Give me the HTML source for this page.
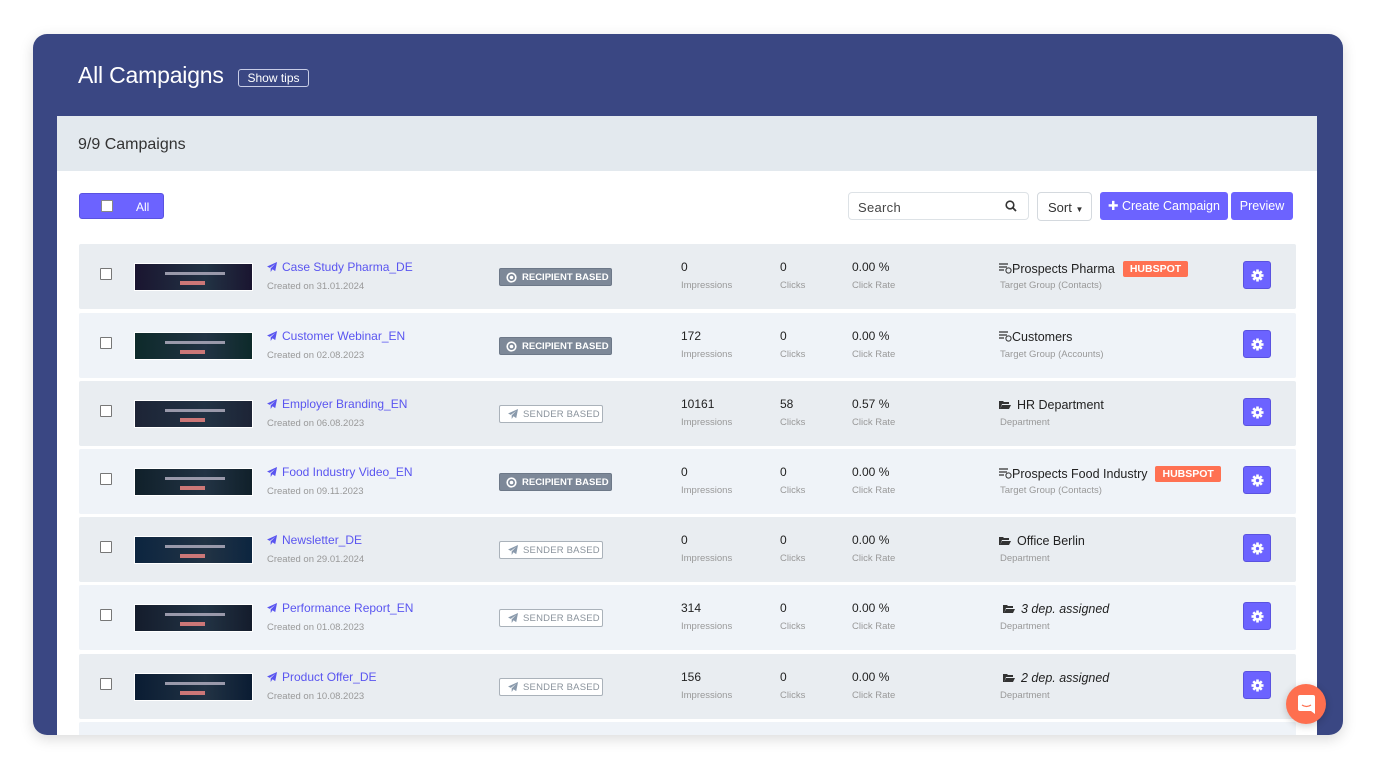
<!DOCTYPE html>
<html><head><meta charset="utf-8"><style>
*{box-sizing:border-box;margin:0;padding:0}
body{width:1376px;height:769px;background:#fff;font-family:"Liberation Sans",sans-serif;position:relative;overflow:hidden}
.shadow{position:absolute;left:33px;top:34px;width:1310px;height:701px;border-radius:14px;box-shadow:0 4px 14px rgba(0,0,0,.15)}
.clip{position:absolute;left:33px;top:34px;width:1310px;height:701px;border-radius:14px;overflow:hidden;background:#3a4783}
.in{position:absolute;left:-33px;top:-34px;width:1376px;height:769px}
.h1{position:absolute;left:78px;top:62px;color:#fff;font-size:23px;font-family:"Liberation Sans",sans-serif;letter-spacing:-.2px}
.tips{position:absolute;left:238px;top:69px;width:71px;height:18px;border:1px solid #c8cde6;border-radius:3px;color:#fff;font-size:12px;text-align:center;line-height:16px}
.panel{position:absolute;left:57px;top:116px;width:1260px;height:660px;background:#fff}
.ph{position:absolute;left:57px;top:116px;width:1260px;height:55px;background:#e3e9ee;color:#333;font-size:16px;padding:20px 0 0 21px}
.btnall{position:absolute;left:79px;top:193px;width:85px;height:26px;background:#6c63ff;border-radius:3px;border:1px solid #5a52e0}
.cb{position:absolute;width:12px;height:12px;border:1.5px solid #777;background:#fff;border-radius:1px}
.search{position:absolute;left:848px;top:192px;width:181px;height:28px;border:1px solid #dde2e6;border-radius:4px;font-size:13px;color:#444;padding:7px 0 0 9px;letter-spacing:.3px}
.sort{position:absolute;left:1037px;top:192px;width:55px;height:29px;border:1px solid #d4d9de;border-radius:4px;font-size:13px;color:#333;padding:7px 0 0 10px}
.pb{position:absolute;top:192px;height:28px;background:#6c63ff;border-radius:3px;color:#fff;font-size:12.5px;text-align:center;line-height:28px}
.row{position:absolute;left:79px;width:1217px;height:65px;border-radius:2px}
.row.a{background:#e9edf1}.row.b{background:#eff3f8}
.th{position:absolute;left:55px;top:19px;width:119px;height:28px;border:1px solid #fff}
.title{position:absolute;left:188px;top:16px;color:#5a55f0;font-size:12px;white-space:nowrap}
.sub{position:absolute;font-size:9.5px;color:#999;white-space:nowrap}
.badge{position:absolute;left:420px;top:24px;height:18px;font-size:9.5px;font-weight:bold;border-radius:2px;padding:0 0 0 22px;line-height:17px;white-space:nowrap}
.rb{width:113px;background:#7d8898;color:#fff;border:1px solid #6d7888}
.sb{width:104px;background:#fff;color:#8a939c;border:1px solid #aab2ba;font-weight:normal;padding-left:23px;letter-spacing:.2px}
.num{position:absolute;top:16px;font-size:12px;color:#222}
.tg{position:absolute;left:920px;top:17px;font-size:12.5px;color:#222;white-space:nowrap}
.hs{display:inline-block;background:#ff7152;color:#fff;font-size:10.5px;font-weight:bold;padding:2px 7px;border-radius:2px;margin-left:8px;vertical-align:1px}
.gear{position:absolute;left:1164px;top:17px;width:28px;height:28px;background:#6c63ff;border-radius:3px;border:1px solid #5a52e0}
.chat{position:absolute;left:1286px;top:684px;width:40px;height:40px;border-radius:50%;background:#fe6f4f;box-shadow:0 2px 8px rgba(0,0,0,.2)}
</style></head><body>
<div class="shadow"></div>
<div class="clip"><div class="in">
<div class="h1">All Campaigns</div>
<div class="tips">Show tips</div>
<div class="panel"></div>
<div class="ph">9/9 Campaigns</div>
<div class="btnall"><div class="cb" style="left:21px;top:6px;border-color:#888"></div><span style="position:absolute;left:56px;top:6px;color:#fff;font-size:12px">All</span></div>
<div class="search">Search<svg style="position:absolute;right:11px;top:7px" width="12" height="12" viewBox="0 0 12 12"><circle cx="5" cy="5" r="3.8" fill="none" stroke="#333" stroke-width="1.6"/><path d="M8 8l3 3" stroke="#333" stroke-width="1.8"/></svg></div>
<div class="sort">Sort <span style="font-size:8px">▼</span></div>
<div class="pb" style="left:1100px;width:128px">✚ Create Campaign</div>
<div class="pb" style="left:1231px;width:62px">Preview</div>

<div class="row a" style="top:244px"></div>
<div class="row b" style="top:313px"></div>
<div class="row a" style="top:381px"></div>
<div class="row b" style="top:449px"></div>
<div class="row a" style="top:517px"></div>
<div class="row b" style="top:585px"></div>
<div class="row a" style="top:654px"></div>
<div class="row b" style="top:722px"></div>

<div id="rows"></div>
</div></div>
<script>
var d=[
["Case Study Pharma_DE","31.01.2024",1,"0","0","0.00 %","Prospects Pharma",1,"Target Group (Contacts)","#1a1530"],
["Customer Webinar_EN","02.08.2023",1,"172","0","0.00 %","Customers",0,"Target Group (Accounts)","#0d2a2a"],
["Employer Branding_EN","06.08.2023",0,"10161","58","0.57 %","HR Department",0,"Department","#1d2436"],
["Food Industry Video_EN","09.11.2023",1,"0","0","0.00 %","Prospects Food Industry",1,"Target Group (Contacts)","#10202a"],
["Newsletter_DE","29.01.2024",0,"0","0","0.00 %","Office Berlin",0,"Department","#0c2540"],
["Performance Report_EN","01.08.2023",0,"314","0","0.00 %","3  dep. assigned",0,"Department","#141c2c"],
["Product Offer_DE","10.08.2023",0,"156","0","0.00 %","2  dep. assigned",0,"Department","#0a1c33"]];
var tops=[244,313,381,449,517,585,654],h="";
var plane='<svg width="11" height="10" viewBox="0 0 12 11" style="vertical-align:-1px;margin-right:4px"><path d="M11 0L0 5l3 1.5L9 2 4 7v4l2-3 3 2z" fill="currentColor"/></svg>';
var folder='<svg width="12" height="10" viewBox="0 0 12 10" style="margin-right:6px;vertical-align:-1px"><path d="M0 1h4l1 1h5v2H3L1 9H0z M3 5h9l-2 4H1z" fill="#333"/></svg>';
var tgi='<svg width="13" height="11" viewBox="0 0 13 11" style="vertical-align:-1px"><path d="M0 1h9M0 4h8M0 7h5" stroke="#333" stroke-width="1.2"/><circle cx="9.5" cy="7.5" r="2.6" fill="none" stroke="#333" stroke-width="1"/></svg>';
d.forEach(function(r,i){var t=tops[i];
h+='<div style="position:absolute;left:79px;top:'+t+'px;width:1217px;height:65px">';
h+='<div class="cb" style="left:21px;top:24px"></div>';
h+='<div class="th" style="background:linear-gradient(90deg,'+r[9]+',#234 60%,'+r[9]+')"><div style="position:absolute;left:30px;top:8px;width:60px;height:3px;background:#99a"></div><div style="position:absolute;left:45px;top:17px;width:25px;height:4px;background:#c77"></div></div>';
h+='<div class="title">'+plane+r[0]+'</div><div class="sub" style="left:188px;top:37px">Created on '+r[1]+'</div>';
h+= r[2]?'<div class="badge rb"><svg style="position:absolute;left:6px;top:3px" width="11" height="11"><circle cx="5.5" cy="5.5" r="4.3" fill="none" stroke="#fff" stroke-width="1.6"/><circle cx="5.5" cy="5.5" r="1.8" fill="#fff"/></svg>RECIPIENT BASED</div>'
 :'<div class="badge sb"><svg style="position:absolute;left:8px;top:3px" width="11" height="10" viewBox="0 0 12 11"><path d="M11 0L0 5l3 1.5L9 2 4 7v4l2-3 3 2z" fill="#8a9aac"/></svg>SENDER BASED</div>';
h+='<div class="num" style="left:602px">'+r[3]+'</div><div class="sub" style="left:602px;top:36px">Impressions</div>';
h+='<div class="num" style="left:701px">'+r[4]+'</div><div class="sub" style="left:701px;top:36px">Clicks</div>';
h+='<div class="num" style="left:773px">'+r[5]+'</div><div class="sub" style="left:773px;top:36px">Click Rate</div>';
var it=r[6].indexOf("assigned")>0;
h+='<div class="tg"'+(it?' style="font-style:italic;left:924px"':'')+'>'+(r[8].indexOf("Target")==0?tgi:folder)+r[6]+(r[7]?'<span class="hs">HUBSPOT</span>':'')+'</div>';
h+='<div class="sub" style="left:921px;top:36px">'+r[8]+'</div>';
h+='<div class="gear"><svg style="position:absolute;left:7px;top:7px" width="13" height="13" viewBox="0 0 14 14"><g fill="#fff"><circle cx="7" cy="7" r="4.5"/><rect x="5.6" y="0.5" width="2.8" height="13"/><rect x="0.5" y="5.6" width="13" height="2.8"/><rect x="5.6" y="0.5" width="2.8" height="13" transform="rotate(45 7 7)"/><rect x="5.6" y="0.5" width="2.8" height="13" transform="rotate(-45 7 7)"/></g><circle cx="7" cy="7" r="1.8" fill="#6c63ff"/></svg></div>';
h+='</div>';});
document.getElementById("rows").innerHTML=h;
</script>
<div class="chat"><svg style="position:absolute;left:12px;top:11px" width="17" height="19" viewBox="0 0 17 19"><path d="M2 0h13a2 2 0 0 1 2 2v17l-4-3H2a2 2 0 0 1-2-2V2a2 2 0 0 1 2-2z" fill="#fff"/><path d="M4 10q4.5 3 9 0" stroke="#fe6f4f" stroke-width="1.3" fill="none"/></svg></div>
</body></html>
